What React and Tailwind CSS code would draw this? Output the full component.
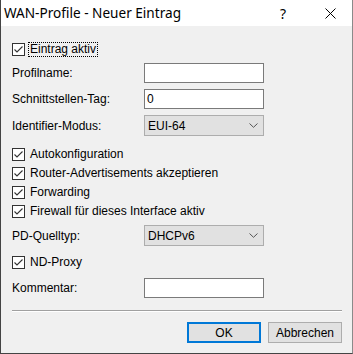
import React from "react";

const Check = ({ checked = true }) => (
  <span className="flex h-[13px] w-[13px] shrink-0 items-center justify-center border border-[#333333] bg-white">
    {checked && (
      <svg width="11" height="11" viewBox="0 0 11 11">
        <path d="M1.5 5.5 L4 8 L9.5 2.5" fill="none" stroke="#333333" strokeWidth="1.1" />
      </svg>
    )}
  </span>
);

const CheckRow = ({ label, focus, className }) => (
  <div className={`flex h-[13px] items-center ${className}`}>
    <Check />
    <span
      className={`ml-[3px] leading-[13px] ${
        focus ? "border border-dotted border-black px-[1px]" : "px-[2px]"
      }`}
    >
      {label}
    </span>
  </div>
);

const Field = ({ label, value = "", className }) => (
  <div className={`flex h-[20px] items-center ${className}`}>
    <span className="w-[132px]">{label}</span>
    <div className="flex h-[20px] w-[120px] items-center border border-[#7a7a7a] bg-white px-[2px]">
      {value}
    </div>
  </div>
);

const Combo = ({ label, value, className }) => (
  <div className={`flex h-[21px] items-center ${className}`}>
    <span className="w-[132px]">{label}</span>
    <div className="flex h-[21px] w-[120px] items-center justify-between border border-[#adadad] bg-[#e1e1e1] pl-[3px] pr-[5px]">
      <span>{value}</span>
      <svg width="9" height="5" viewBox="0 0 9 5">
        <path d="M0.5 0.5 L4.5 4.3 L8.5 0.5" fill="none" stroke="#555555" strokeWidth="1" />
      </svg>
    </div>
  </div>
);

export default function App() {
  return (
    <div
      className="flex h-[354px] w-[353px] flex-col border-b border-l border-r border-b-[#444444] border-l-[#444444] border-r-[#8a8a8a] bg-[#f0f0f0] text-[12px] text-black"
      style={{ fontFamily: '"Liberation Sans", Arial, sans-serif' }}
    >
      <div className="flex h-[26px] shrink-0 items-center bg-white">
        <span
          className="ml-[3px] text-[13.6px] text-black"
          style={{ fontFamily: '"Noto Sans", "Open Sans", sans-serif' }}
        >
          WAN-Profile - Neuer Eintrag
        </span>
        <span
          className="ml-auto mr-[39px] text-[14px] text-black"
          style={{ fontFamily: '"Noto Sans", sans-serif' }}
        >
          ?
        </span>
        <svg className="mr-[16px]" width="11" height="11" viewBox="0 0 11 11">
          <path d="M0.5 0.5 L10.5 10.5 M10.5 0.5 L0.5 10.5" stroke="#000000" strokeWidth="1" />
        </svg>
      </div>

      <div className="flex flex-col pl-[11px] pr-[10px]">
        <div className="mt-[16px] flex h-[15px] items-center">
          <CheckRow label="Eintrag aktiv" focus />
        </div>
        <Field label="Profilname:" className="mt-[6px]" />
        <Field label="Schnittstellen-Tag:" value="0" className="mt-[6px]" />
        <Combo label="Identifier-Modus:" value="EUI-64" className="mt-[6px]" />
        <CheckRow label="Autokonfiguration" className="mt-[12px]" />
        <CheckRow label="Router-Advertisements akzeptieren" className="mt-[6px]" />
        <CheckRow label="Forwarding" className="mt-[6px]" />
        <CheckRow label="Firewall für dieses Interface aktiv" className="mt-[6px]" />
        <Combo label="PD-Quelltyp:" value="DHCPv6" className="mt-[7px]" />
        <CheckRow label="ND-Proxy" className="mt-[10px]" />
        <Field label="Kommentar:" className="mt-[9px]" />
        <div className="mt-[12px] h-[1px] bg-[#a0a0a0]" />
        <div className="h-[1px] bg-white" />
        <div className="mt-[10px] flex justify-end gap-[7px]">
          <button className="flex h-[21px] w-[74px] items-center justify-center border-2 border-[#0078d7] bg-[#e1e1e1]">
            OK
          </button>
          <button className="flex h-[21px] w-[74px] items-center justify-center border border-[#adadad] bg-[#e1e1e1]">
            Abbrechen
          </button>
        </div>
      </div>
    </div>
  );
}
